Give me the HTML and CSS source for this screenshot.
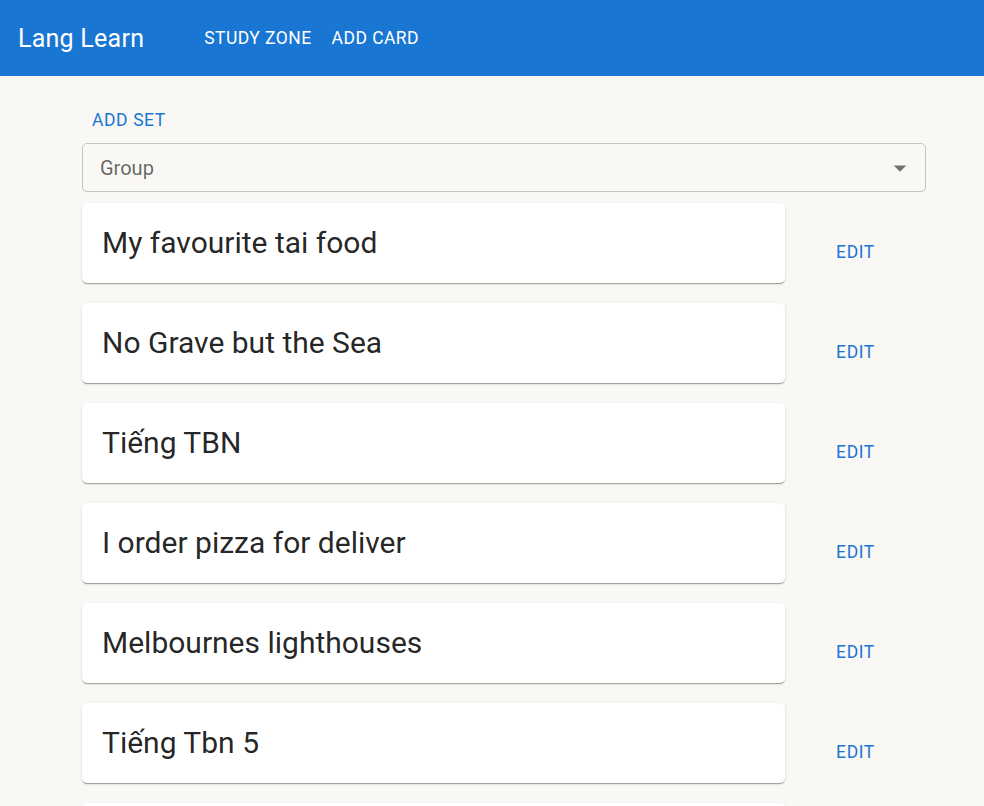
FILE: index.html
```html
<!DOCTYPE html>
<html lang="en">
<head>
<meta charset="utf-8">
<title>Lang Learn</title>
<link rel="stylesheet" href="styles.css">
</head>
<body>
<header class="appbar">
  <div class="brand">Lang Learn</div>
  <nav class="nav">
    <a class="nav-btn">STUDY ZONE</a>
    <a class="nav-btn">ADD CARD</a>
  </nav>
</header>
<main class="content">
  <div class="toolbar">
    <button class="text-btn">ADD SET</button>
  </div>
  <div class="select">
    <span class="select-value">Group</span>
    <svg class="select-icon" viewBox="0 0 24 24" width="30" height="30"><path d="M7 10l5 5 5-5z" fill="currentColor"/></svg>
  </div>
  <ul class="sets">
    <li class="set-row"><div class="card">My favourite tai food</div><div class="edit-col"><button class="text-btn">EDIT</button></div></li>
    <li class="set-row"><div class="card">No Grave but the Sea</div><div class="edit-col"><button class="text-btn">EDIT</button></div></li>
    <li class="set-row"><div class="card">Tiếng TBN</div><div class="edit-col"><button class="text-btn">EDIT</button></div></li>
    <li class="set-row"><div class="card">I order pizza for deliver</div><div class="edit-col"><button class="text-btn">EDIT</button></div></li>
    <li class="set-row"><div class="card">Melbournes lighthouses</div><div class="edit-col"><button class="text-btn">EDIT</button></div></li>
    <li class="set-row"><div class="card">Tiếng Tbn 5</div><div class="edit-col"><button class="text-btn">EDIT</button></div></li>
    <li class="set-row"><div class="card"></div><div class="edit-col"></div></li>
  </ul>
</main>
</body>
</html>
```
FILE: styles.css
```css
* { box-sizing: border-box; }
html, body { margin: 0; padding: 0; }
body {
  background: #f9f8f5;
  font-family: Roboto, "Noto Sans", "Liberation Sans", sans-serif;
  color: rgba(0,0,0,0.87);
  overflow: hidden;
  height: 806px;
}
.appbar {
  height: 76px;
  background: #1976d2;
  color: #fff;
  display: flex;
  align-items: center;
  padding-left: 18px;
}
.brand {
  font-size: 25px;
  font-weight: 400;
  letter-spacing: 0.25px;
  margin-right: 50px;
}
.nav { display: flex; }
.nav-btn {
  font-size: 17.5px;
  font-weight: 400;
  letter-spacing: 0.45px;
  padding: 7px 10px;
  line-height: 30px;
}
.content {
  width: 844px;
  margin-left: 82px;
  padding-top: 21px;
}
.toolbar { display: flex; height: 46px; align-items: center; }
.text-btn {
  background: none;
  border: 0;
  font-family: inherit;
  font-size: 17.5px;
  font-weight: 400;
  letter-spacing: 0.6px;
  color: #1976d2;
  padding: 7px 10px;
  line-height: 31px;
  cursor: pointer;
}
.select {
  height: 49px;
  border: 1px solid #c4c4c4;
  border-radius: 5px;
  display: flex;
  align-items: center;
  justify-content: space-between;
  padding-left: 17px;
  padding-right: 10px;
}
.select-value {
  font-size: 20px;
  color: rgba(0,0,0,0.6);
}
.select-icon { color: rgba(0,0,0,0.54); display: block; }
.sets {
  list-style: none;
  margin: 11px 0 0;
  padding: 0;
  display: flex;
  flex-direction: column;
  gap: 20px;
}
.set-row {
  display: flex;
  align-items: flex-start;
}
.card {
  width: 703px;
  height: 80px;
  background: #fff;
  border-radius: 5px;
  padding: 20px 21px 20px 20px;
  font-size: 30px;
  line-height: 40px;
  box-shadow: 0 2px 1px -1px rgba(0,0,0,0.2), 0 1px 1px 0 rgba(0,0,0,0.14), 0 1px 3px 0 rgba(0,0,0,0.12);
}
.edit-col {
  flex: 1;
  display: flex;
  justify-content: center;
  padding-top: 27px;
}
```
